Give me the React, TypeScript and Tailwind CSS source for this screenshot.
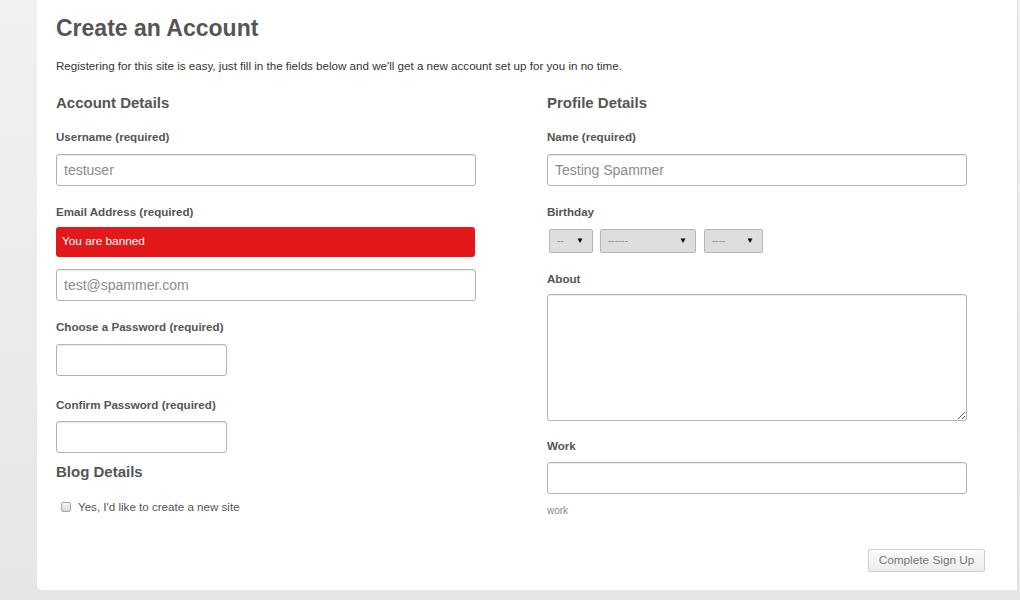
import React from 'react';

const font = { fontFamily: '"Liberation Sans", Arial, sans-serif' };

const Label = ({ text, mt }: { text: string; mt: string }) => (
  <div className={`${mt} h-4 text-[11.6px] leading-4 font-bold text-[#555]`}>{text}</div>
);

const TextInput = ({ placeholder, w, mt }: { placeholder?: string; w: string; mt: string }) => (
  <input
    type="text"
    placeholder={placeholder}
    className={`${mt} ${w} block h-8 rounded-[3px] border border-[#b3b3b3] bg-white px-[7px] text-[14px] text-[#555] placeholder:text-[#8c8c8c] shadow-[inset_0_1px_1px_rgba(0,0,0,0.08)] outline-none`}
  />
);

const FakeSelect = ({ text, w }: { text: string; w: string }) => (
  <div className={`${w} flex h-6 items-center justify-between rounded-[2px] border border-[#b5b5b5] bg-[#dedede] pl-[7px] pr-[8px]`}>
    <span className="text-[10px] leading-none text-[#8a8a8a]">{text}</span>
    <span className="text-[8px] leading-none text-black">▼</span>
  </div>
);

const App: React.FC = () => {
  return (
    <div style={font} className="h-[600px] w-[1020px] overflow-hidden bg-gradient-to-b from-[#f1f1f1] to-[#e6e6e6]">
      <div className="ml-[37px] h-[590px] w-[981px] rounded-bl-[5px] border-r border-[#dcdcdc] bg-white pl-[19px]">
        {/* Header */}
        <h1 className="pt-[14px] h-[42px] text-[23px] leading-[28px] font-bold text-[#555]">Create an Account</h1>
        <p className="mt-4 h-4 text-[11.6px] leading-4 text-[#333]">
          Registering for this site is easy, just fill in the fields below and we'll get a new account set up for you in no time.
        </p>

        <div className="grid grid-cols-[420px_419px] gap-x-[71px]">
          {/* Account details */}
          <div>
            <h2 className="mt-[19px] h-5 text-[15px] leading-5 font-bold text-[#555]">Account Details</h2>
            <Label text="Username (required)" mt="mt-4" />
            <TextInput placeholder="testuser" w="w-[420px]" mt="mt-[9px]" />
            <Label text="Email Address (required)" mt="mt-[18px]" />
            <div className="mt-[7px] flex h-[30px] w-[419px] items-center rounded-[3px] bg-[#e2181a] px-[6px] text-[11.8px] text-white">
              You are banned
            </div>
            <TextInput placeholder="test@spammer.com" w="w-[420px]" mt="mt-3" />
            <Label text="Choose a Password (required)" mt="mt-[18px]" />
            <TextInput w="w-[171px]" mt="mt-[9px]" />
            <Label text="Confirm Password (required)" mt="mt-[21px]" />
            <TextInput w="w-[171px]" mt="mt-2" />
            <h2 className="mt-[9px] h-5 text-[15px] leading-5 font-bold text-[#555]">Blog Details</h2>
            <label className="mt-[17px] ml-[5px] flex h-4 items-center gap-[7px] text-[11.6px] text-[#555]">
              <span className="h-[10px] w-[10px] rounded-[2px] border border-[#a9a9a9] bg-gradient-to-b from-[#f4f4f4] to-[#d8d8d8]" />
              Yes, I'd like to create a new site
            </label>
          </div>

          {/* Profile details */}
          <div>
            <h2 className="mt-[19px] h-5 text-[15px] leading-5 font-bold text-[#555]">Profile Details</h2>
            <Label text="Name (required)" mt="mt-4" />
            <TextInput placeholder="Testing Spammer" w="w-[420px]" mt="mt-[9px]" />
            <Label text="Birthday" mt="mt-[18px]" />
            <div className="mt-[9px] ml-[2px] flex gap-[7px]">
              <FakeSelect text="--" w="w-[44px]" />
              <FakeSelect text="------" w="w-[96px]" />
              <div className="ml-px">
                <FakeSelect text="----" w="w-[59px]" />
              </div>
            </div>
            <Label text="About" mt="mt-[18px]" />
            <textarea className="mt-[7px] block h-[127px] w-[420px] rounded-[3px] border border-[#b3b3b3] bg-white shadow-[inset_0_1px_1px_rgba(0,0,0,0.08)] outline-none" />
            <Label text="Work" mt="mt-[17px]" />
            <TextInput w="w-[420px]" mt="mt-2" />
            <div className="mt-[9px] h-4 text-[10px] leading-4 text-[#888]">work</div>
          </div>
        </div>

        <div className="mt-[30px] flex justify-end pr-[32px]">
          <button className="h-[23px] w-[117px] rounded-[2px] border border-[#cfcfcf] bg-gradient-to-b from-[#fbfbfb] to-[#ececec] text-[11.8px] text-[#777]">
            Complete Sign Up
          </button>
        </div>
      </div>
    </div>
  );
};

export default App;
